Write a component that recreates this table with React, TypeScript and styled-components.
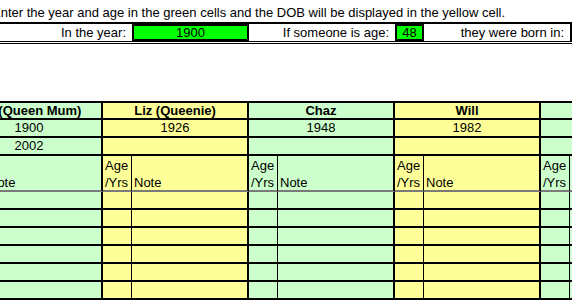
import styled, { createGlobalStyle } from 'styled-components';

/* Style */
const GlobalStyle = createGlobalStyle`
  html, body {
    margin: 0;
    padding: 0;
    background: #ffffff;
    overflow: hidden;
  }
  body {
    font-family: "Liberation Sans", Arial, sans-serif;
    font-size: 13px;
    color: #000000;
  }
`;

const GREEN = '#ccffcc';
const YELLOW = '#ffff99';
const COLUMNS = 'repeat(5, 29px 117px)';

const Sheet = styled.div`
  width: 572px;
  height: 300px;
  overflow: hidden;
`;
// the visible window starts part way through the first group
const Inner = styled.div`
  width: 730px;
  margin-left: -43px;
`;
// Instruction line
const Title = styled.div`
  padding: 5px 0 0 35px;
  height: 15px;
  line-height: 15px;
  white-space: nowrap;
`;
// Input row
const InputRow = styled.div`
  display: grid;
  grid-template-columns: ${COLUMNS};
  margin-top: 2px;
  border-top: 2px solid #000;
  border-bottom: 3px double #000;
`;
const InputLabel = styled.div<{ $span: number }>`
  grid-column: span ${(p) => p.$span};
  height: 17px;
  line-height: 17px;
  padding-right: 6px;
  text-align: right;
  white-space: nowrap;
  background: #ffffff;
`;
const InputValue = styled.div`
  box-sizing: border-box;
  height: 17px;
  line-height: 13px;
  text-align: center;
  background: #00ff00;
  border: 2px solid #000;
`;
const ResultCell = styled.div`
  box-sizing: border-box;
  height: 17px;
  background: ${YELLOW};
  border: 2px solid #000;
  border-right: none;
`;
// Table
const Table = styled.div`
  display: grid;
  grid-template-columns: ${COLUMNS};
  margin-top: 57px;
  border-top: 2px solid #000;
`;
const GroupCell = styled.div<{ $bg: string; $h: number; $bold?: boolean }>`
  grid-column: span 2;
  box-sizing: border-box;
  height: ${(p) => p.$h}px;
  line-height: ${(p) => p.$h - 2}px;
  background: ${(p) => p.$bg};
  border-right: 2px solid #000;
  border-bottom: 2px solid #000;
  text-align: center;
  white-space: nowrap;
  font-weight: ${(p) => (p.$bold ? 700 : 400)};
`;
const Cell = styled.div<{ $bg: string; $h: number; $age?: boolean; $head?: boolean }>`
  box-sizing: border-box;
  display: flex;
  flex-direction: column;
  justify-content: flex-end;
  height: ${(p) => p.$h}px;
  padding-left: 2px;
  line-height: 17px;
  white-space: nowrap;
  background: ${(p) => p.$bg};
  border-right: ${(p) => (p.$age ? '1px' : '2px')} solid #000;
  border-bottom: 2px solid ${(p) => (p.$head ? '#7a7a7a' : '#000')};

  span:last-child {
    margin-bottom: -1px;
  }
`;

const groups = [
  { name: 'Liz (Queen Mum)', born: '1900', died: '2002', bg: GREEN },
  { name: 'Liz (Queenie)', born: '1926', died: '', bg: YELLOW },
  { name: 'Chaz', born: '1948', died: '', bg: GREEN },
  { name: 'Will', born: '1982', died: '', bg: YELLOW },
  { name: '', born: '', died: '', bg: GREEN },
];

const dataRows = [0, 1, 2, 3, 4, 5];

export default function App() {
  return (
    <>
      <GlobalStyle />
      <Sheet>
        <Inner>
          <Title>
            Enter the year and age in the green cells and the DOB will be
            displayed in the yellow cell.
          </Title>

          <InputRow>
            <InputLabel $span={3}>In the year:</InputLabel>
            <InputValue>1900</InputValue>
            <InputLabel $span={2}>If someone is age:</InputLabel>
            <InputValue>48</InputValue>
            <InputLabel $span={2}>they were born in:</InputLabel>
            <ResultCell />
          </InputRow>

          <Table>
            {groups.map((g, i) => (
              <GroupCell key={`n${i}`} $bg={g.bg} $h={17} $bold>
                {g.name}
              </GroupCell>
            ))}
            {groups.map((g, i) => (
              <GroupCell key={`b${i}`} $bg={g.bg} $h={18}>
                {g.born}
              </GroupCell>
            ))}
            {groups.map((g, i) => (
              <GroupCell key={`d${i}`} $bg={g.bg} $h={18}>
                {g.died}
              </GroupCell>
            ))}
            {groups.map((g, i) => [
              <Cell key={`ha${i}`} $bg={g.bg} $h={36} $age $head>
                <span>Age</span>
                <span>/Yrs</span>
              </Cell>,
              <Cell key={`hn${i}`} $bg={g.bg} $h={36} $head>
                <span>Note</span>
              </Cell>,
            ])}
            {dataRows.map((r) =>
              groups.map((g, i) => [
                <Cell key={`a${r}-${i}`} $bg={g.bg} $h={18} $age />,
                <Cell key={`t${r}-${i}`} $bg={g.bg} $h={18} />,
              ])
            )}
          </Table>
        </Inner>
      </Sheet>
    </>
  );
}
